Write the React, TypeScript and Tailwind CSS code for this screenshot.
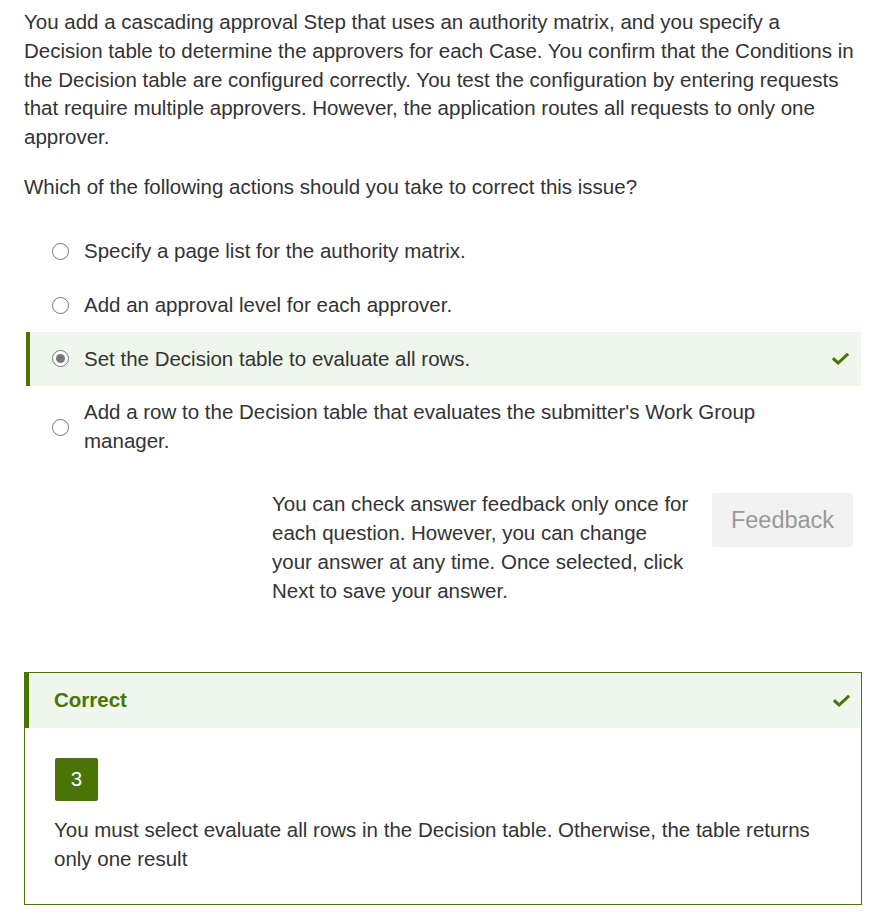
import { useState } from "react";

const options = [
  "Specify a page list for the authority matrix.",
  "Add an approval level for each approver.",
  "Set the Decision table to evaluate all rows.",
  "Add a row to the Decision table that evaluates the submitter's Work Group manager.",
];

function Check({ className = "" }: { className?: string }) {
  return (
    <svg viewBox="0 0 16 12" className={className} fill="none">
      <path
        d="M1.5 6.2 L5.6 10 L14.5 1.8"
        stroke="currentColor"
        strokeWidth="3"
        strokeLinecap="square"
      />
    </svg>
  );
}

function Radio({ checked }: { checked: boolean }) {
  return (
    <span className="flex h-[17px] w-[17px] shrink-0 items-center justify-center rounded-full border border-[#767676] bg-white">
      {checked && <span className="h-[9px] w-[9px] rounded-full bg-[#767676]" />}
    </span>
  );
}

export default function App() {
  const [selected, setSelected] = useState(2);

  return (
    <div
      className="min-h-screen bg-white pl-6 pr-7 pt-[8px] text-[20.5px] leading-[28.75px] text-[#333]"
      style={{ fontFamily: '"Liberation Sans", Arial, sans-serif' }}
    >
      <p>
        You add a cascading approval Step that uses an authority matrix, and you specify a
        Decision table to determine the approvers for each Case. You confirm that the
        Conditions in the Decision table are configured correctly. You test the configuration
        by entering requests that require multiple approvers. However, the application routes
        all requests to only one approver.
      </p>
      <p className="mt-[21px]">Which of the following actions should you take to correct this issue?</p>

      <ul className="mt-[23px] ml-[2px]">
        {options.map((opt, i) => {
          const active = i === selected;
          return (
            <li
              key={i}
              onClick={() => setSelected(i)}
              className={`flex cursor-pointer items-center border-l-4 py-[12.5px] pl-[22px] pr-[12px] ${
                active ? "border-[#4a7406] bg-[#eff6ec]" : "border-transparent"
              }`}
            >
              <Radio checked={active} />
              <span className="ml-[15px] flex-1 pr-[60px]">{opt}</span>
              {active && <Check className="h-[12px] w-[17px] text-[#4a7406]" />}
            </li>
          );
        })}
      </ul>

      <div className="mt-[22px] flex justify-end pr-[8px]">
        <p className="w-[419px]">
          You can check answer feedback only once for each question. However, you can change
          your answer at any time. Once selected, click Next to save your answer.
        </p>
        <button className="mt-[3px] ml-[21px] h-[54px] w-[141px] self-start rounded-[3px] bg-[#f2f2f2] text-[23.5px] text-[#999]">
          Feedback
        </button>
      </div>

      <div className="mt-[67px] mr-[-1px] border border-[#4a7406]">
        <div className="flex h-[55px] items-center border-l-4 border-[#4a7406] bg-[#eff6ec] pl-[25px] pr-[11px]">
          <span className="flex-1 font-bold text-[#4a7406]">Correct</span>
          <Check className="h-[12px] w-[17px] text-[#4a7406]" />
        </div>
        <div className="px-[29px] pt-[30px] pb-[30px]">
          <div className="ml-[1px] flex h-[43px] w-[43px] items-center justify-center rounded-[2px] bg-[#4a7406] text-white">
            3
          </div>
          <p className="mt-[15px]">
            You must select evaluate all rows in the Decision table. Otherwise, the table returns
            only one result
          </p>
        </div>
      </div>
    </div>
  );
}
